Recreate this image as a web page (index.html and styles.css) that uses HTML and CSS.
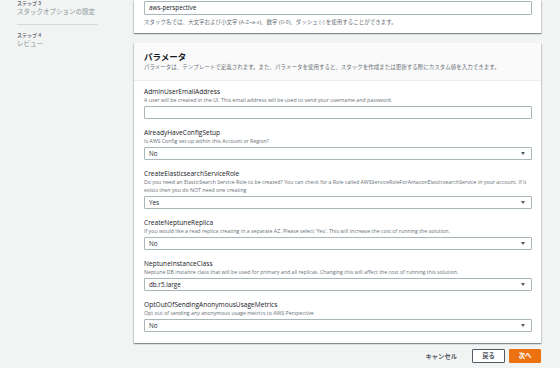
FILE: index.html
```html
<!DOCTYPE html>
<html lang="ja">
<head>
    <meta charset="UTF-8">
    <meta name="viewport" content="width=device-width, initial-scale=1.0">
    <title>スタックの詳細を指定</title>
    <link rel="stylesheet" href="styles.css">
</head>
<body>
    <div class="layout">
        <!-- Wizard steps -->
        <nav class="steps">
            <div class="step">
                <div class="step-num">ステップ 3</div>
                <div class="step-name">スタックオプションの設定</div>
            </div>
            <div class="step">
                <div class="step-num">ステップ 4</div>
                <div class="step-name">レビュー</div>
            </div>
        </nav>

        <main class="content">
            <!-- Stack name (scrolled) -->
            <section class="card card-top">
                <div class="text-input">aws-perspective</div>
                <p class="hint">スタック名では、大文字および小文字 (A-Z~a-z)、数字 (0-9)、ダッシュ (-) を使用することができます。</p>
            </section>

            <!-- Parameters -->
            <section class="card">
                <header class="card-header">
                    <h2>パラメータ</h2>
                    <p>パラメータは、テンプレートで定義されます。また、パラメータを使用すると、スタックを作成または更新する際にカスタム値を入力できます。</p>
                </header>
                <div class="card-body">
                    <div class="field">
                        <div class="field-label">AdminUserEmailAddress</div>
                        <div class="field-hint">A user will be created in the UI. This email address will be used to send your username and password.</div>
                        <div class="text-input"></div>
                    </div>
                    <div class="field">
                        <div class="field-label">AlreadyHaveConfigSetup</div>
                        <div class="field-hint">Is AWS Config set-up within this Account or Region?</div>
                        <div class="select">No<span class="caret"></span></div>
                    </div>
                    <div class="field">
                        <div class="field-label">CreateElasticsearchServiceRole</div>
                        <div class="field-hint">Do you need an ElasticSearch Service Role to be created? You can check for a Role called AWSServiceRoleForAmazonElasticsearchService in your account. If it exists then you do NOT need one creating</div>
                        <div class="select">Yes<span class="caret"></span></div>
                    </div>
                    <div class="field">
                        <div class="field-label">CreateNeptuneReplica</div>
                        <div class="field-hint">If you would like a read replica creating in a separate AZ. Please select 'Yes'. This will increase the cost of running the solution.</div>
                        <div class="select">No<span class="caret"></span></div>
                    </div>
                    <div class="field">
                        <div class="field-label">NeptuneInstanceClass</div>
                        <div class="field-hint">Neptune DB instance class that will be used for primary and all replicas. Changing this will affect the cost of running this solution.</div>
                        <div class="select">db.r5.large<span class="caret"></span></div>
                    </div>
                    <div class="field">
                        <div class="field-label">OptOutOfSendingAnonymousUsageMetrics</div>
                        <div class="field-hint">Opt out of sending any anonymous usage metrics to AWS Perspective</div>
                        <div class="select">No<span class="caret"></span></div>
                    </div>
                </div>
            </section>

            <div class="actions">
                <span class="btn-link">キャンセル</span>
                <span class="btn">戻る</span>
                <span class="btn btn-primary">次へ</span>
            </div>
        </main>
    </div>
</body>
</html>
```

FILE: styles.css
```css
/* Basic Reset */
* {
    margin: 0;
    padding: 0;
    box-sizing: border-box;
}

body {
    font-family: "Open Sans", "Noto Sans CJK JP", sans-serif;
    background-color: #f2f3f3;
    color: #16191f;
    height: 368px;
    overflow: hidden;
}

.layout {
    display: flex;
    align-items: flex-start;
}

/* Wizard steps on the left */
.steps {
    width: 81px;
    margin-left: 17px;
}

.step {
    padding-bottom: 7px;
}

.step + .step {
    border-top: 1px solid #d5dbdb;
    padding-top: 7px;
}

.step-num {
    font-size: 5px;
    line-height: 7px;
    font-weight: 700;
    color: #687078;
}

.step-name {
    font-size: 6.5px;
    line-height: 10px;
    color: #879596;
}

/* Main column */
.content {
    width: 407px;
    margin-left: 36px;
}

.card {
    background-color: #ffffff;
    box-shadow: 0 1px 1px rgba(0, 28, 36, 0.3), 1px 1px 1px rgba(0, 28, 36, 0.12), -1px 1px 1px rgba(0, 28, 36, 0.12);
}

.card-top {
    padding: 1px 9px 7.5px 10px;
}

.card + .card {
    margin-top: 10px;
}

.hint {
    margin-top: 2.5px;
    font-size: 5.5px;
    line-height: 8px;
    color: #687078;
}

.card-header {
    background-color: #fafafa;
    border-bottom: 1px solid #eaeded;
    padding: 7.5px 10px 8.5px;
}

.card-header h2 {
    font-size: 8.5px;
    line-height: 11px;
    font-weight: 700;
}

.card-header p {
    margin-top: 1.5px;
    font-size: 5.5px;
    line-height: 8px;
    color: #687078;
}

.card-body {
    display: flex;
    flex-direction: column;
    gap: 9.5px;
    padding: 7.25px 9px 11px 10px;
}

.field-label {
    font-size: 6.6px;
    line-height: 8.5px;
    color: #16191f;
}

.field-hint {
    font-size: 5.25px;
    line-height: 8px;
    color: #687078;
    margin-bottom: 2px;
}

/* Inputs and selects */
.text-input,
.select {
    height: 13px;
    border: 1px solid #aab7b8;
    border-radius: 1px;
    background-color: #ffffff;
    font-size: 6.3px;
    line-height: 11px;
    padding: 0 4px;
    color: #16191f;
}

.card-top .text-input {
    height: 14px;
    line-height: 12px;
}

.select {
    display: flex;
    align-items: center;
    justify-content: space-between;
    line-height: normal;
    padding-right: 6px;
}

.caret {
    width: 0;
    height: 0;
    border-left: 2.5px solid transparent;
    border-right: 2.5px solid transparent;
    border-top: 3px solid #545b64;
}

/* Footer buttons */
.actions {
    display: flex;
    justify-content: flex-end;
    align-items: center;
    gap: 4px;
    margin-top: 6px;
}

.btn-link,
.btn {
    font-size: 6.3px;
    font-weight: 700;
    color: #545b64;
}

.btn-link {
    margin-right: 11px;
}

.btn {
    width: 33px;
    height: 14px;
    line-height: 12px;
    border: 1px solid #545b64;
    border-radius: 1px;
    background-color: #ffffff;
    text-align: center;
}

.btn-primary {
    width: 32px;
    background-color: #ec7211;
    border-color: #ec7211;
    color: #ffffff;
}
```
